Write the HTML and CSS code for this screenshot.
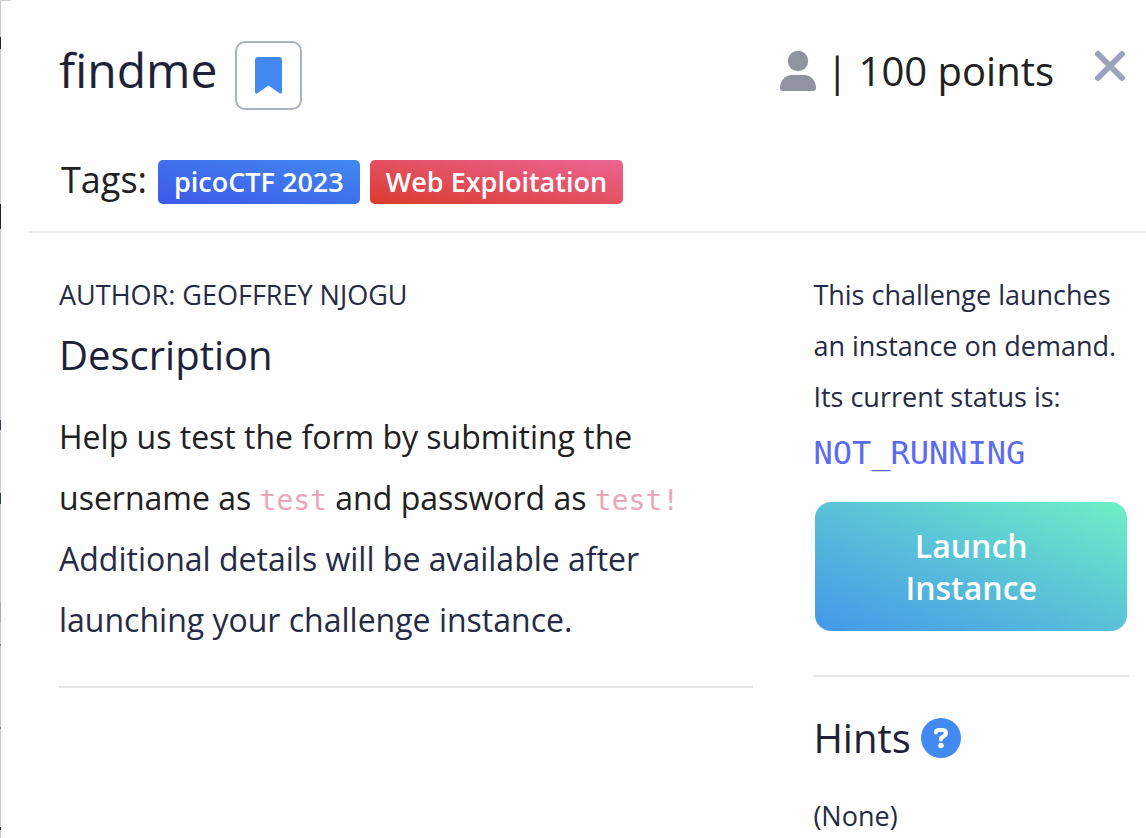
FILE: index.html
```
<!DOCTYPE html>
<html lang="en">
<head>
<meta charset="utf-8">
<meta name="viewport" content="width=device-width, initial-scale=1">
<title>findme</title>
<link rel="stylesheet" href="styles.css">
</head>
<body>
<main class="modal">
  <header class="modal-header">
    <div class="title-row">
      <h1 class="title">findme</h1>
      <button class="bookmark" type="button" aria-label="Bookmark">
        <svg width="27" height="37" viewBox="0 0 27 37" aria-hidden="true"><path fill="#4289f1" d="M3 0h21q3 0 3 3v32q0 2-2 1.500L13.500 28.500 2 36.500q-2 .500-2-1.500V3q0-3 3-3z"/></svg>
      </button>
      <div class="points">
        <svg width="36" height="40" viewBox="0 0 36 40" aria-hidden="true"><g fill="#9194a0"><circle cx="18" cy="10" r="10.200"/><path d="M12 24h12c7 0 12 6 12 13q0 3-3 3H3q-3 0-3-3c0-7 5-13 12-13z"/></g></svg>
        <span>| 100 points</span>
      </div>
      <button class="close" type="button" aria-label="Close">
        <svg width="32" height="32" viewBox="0 0 32 32" aria-hidden="true"><path d="M4 4l24 24M28 4L4 28" stroke="#9ea3bd" stroke-width="6" stroke-linecap="round"/></svg>
      </button>
    </div>
    <div class="tags">
      <span class="tags-label">Tags:</span>
      <span class="badge badge-blue">picoCTF 2023</span>
      <span class="badge badge-red">Web Exploitation</span>
    </div>
  </header>
  <div class="modal-body">
    <section class="details">
      <p class="small-text">AUTHOR: GEOFFREY NJOGU</p>
      <h2 class="subtitle">Description</h2>
      <p class="text">Help us test the form by submiting the username as <code>test</code> and password as <code>test!</code></p>
      <p class="text text-navy">Additional details will be available after launching your challenge instance.</p>
      <hr class="rule">
    </section>
    <aside class="side">
      <p class="small-text">This challenge launches an instance on demand.<br>Its current status is:</p>
      <p class="status">NOT_RUNNING</p>
      <button class="launch" type="button">Launch<br>Instance</button>
      <hr class="rule">
      <div class="hints">
        <h2 class="subtitle">Hints</h2>
        <button class="help" type="button" aria-label="About hints">
          <svg width="40" height="40" viewBox="0 0 40 40" aria-hidden="true"><circle cx="20" cy="20" r="20" fill="#4289f1"/><path d="M15 14.500Q15 12 18 12h3.500c4 0 4.500 4.500 1.500 6l-3 2v1.500" fill="none" stroke="#fff" stroke-width="4" stroke-linecap="round" stroke-linejoin="round"/><circle cx="20" cy="27.500" r="2.700" fill="#fff"/></svg>
        </button>
      </div>
      <p class="small-text">(None)</p>
    </aside>
  </div>
</main>
</body>
</html>
```
FILE: styles.css
```
* { box-sizing: border-box; }

body {
  margin: 0;
  background: #fefefe;
  color: #212121;
  font-family: "Open Sans", "Noto Sans", sans-serif;
}

h1, h2, p { margin: 0; font-weight: 400; }

button {
  padding: 0;
  border: 0;
  background: none;
  font-family: inherit;
  cursor: pointer;
}

svg { display: block; }

/* Thin strip of the page behind the dialog, seen along its left and top edges */
.modal {
  min-height: 100vh;
  padding-left: 29px;
  background:
    linear-gradient(#cccccc, #cccccc) 0 0 / 11px 1px no-repeat,
    linear-gradient(#cacaca 37px, #1d2238 37px 49px, #cacaca 49px 204px,
      #1d2238 204px 229px, #cacaca 229px 420px, #2e3968 420px 430px,
      #cacaca 430px 493px, #2e3968 493px 504px, #cacaca 504px 602px,
      #aaaabc 602px 623px, #cacaca 623px 644px, #77778a 644px 646px,
      #c8c8d0 646px 727px, #77778a 727px 729px, #cacaca 729px 827px,
      #252040 827px 830px, #cacaca 830px) 0 0 / 1px 100% no-repeat;
}

.modal-header {
  padding: 40px 20px 27px 30px;
  border-bottom: 2px solid #e9ebef;
}

.title-row {
  display: flex;
  align-items: flex-start;
}

.title {
  color: #1d2238;
  font-size: 48px;
  line-height: 60px;
}

.bookmark {
  display: grid;
  place-items: center;
  width: 67px;
  height: 69px;
  margin: 1px 0 0 18px;
  border: 2px solid #adb3bb;
  border-radius: 10px;
}

.points {
  display: flex;
  align-items: center;
  gap: 10px;
  margin-left: auto;
  font-size: 40px;
  line-height: 62px;
}

.close { margin: 10px 0 0 40px; }

.tags {
  display: flex;
  align-items: flex-start;
  gap: 10px;
  margin-top: 50px;
}

.tags-label {
  padding: 0 1px 0 2px;
  font-size: 36px;
  line-height: 40px;
}

.badge {
  padding: 0 16px;
  border-radius: 5px;
  color: #fff;
  font-size: 27px;
  font-weight: 600;
  line-height: 44px;
}

.badge-blue { background: linear-gradient(to top right, #3d58e9, #4289f1); }
.badge-red { background: linear-gradient(to top right, #db3b2d, #ec6595); }

.modal-body {
  display: grid;
  grid-template-columns: 11fr 5fr;
  gap: 60px;
  padding: 36px 17px 0 30px;
}

.small-text {
  color: #252b45;
  font-size: 27px;
  line-height: 51px;
}

.subtitle {
  color: #1d2238;
  font-size: 40px;
  line-height: 60px;
}

.details .subtitle { margin: 5px 0 21px; }

.text {
  font-size: 32px;
  line-height: 61px;
}

.text-navy { color: #252b45; }

.text code {
  color: #eba7b7;
  font-family: "DejaVu Sans Mono", monospace;
  font-size: 28px;
  line-height: 28px;
}

.rule {
  margin: 36px 0 0;
  border: 0;
  border-top: 2px solid #e5e5e5;
}

.status {
  color: #5b6af0;
  font-family: "DejaVu Sans Mono", monospace;
  font-size: 32px;
  line-height: 62px;
}

.launch {
  display: block;
  width: calc(100% - 4px);
  margin: 18px 2px 0;
  padding: 23px 0 22px;
  border-radius: 16px;
  background: linear-gradient(to top right, #4497ea, #59c1d8 50%, #6ef0c5);
  color: #fff;
  font-size: 32px;
  font-weight: 600;
  line-height: 42px;
}

.side .rule { margin-top: 44px; }

.hints {
  display: flex;
  align-items: center;
  gap: 10px;
  margin: 31px 0 22px;
}
```
